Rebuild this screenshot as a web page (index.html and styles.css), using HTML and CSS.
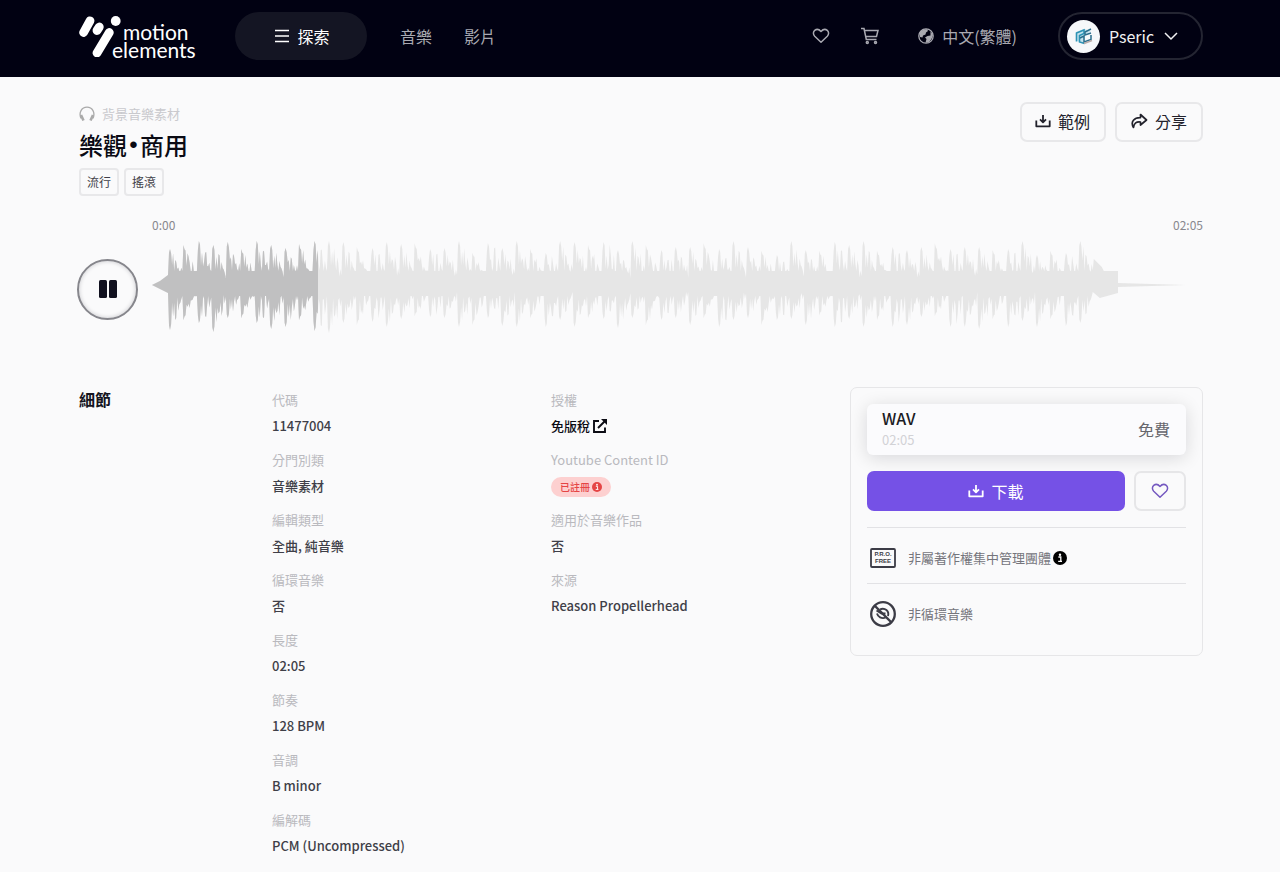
FILE: index.html
```html
<!DOCTYPE html>
<html lang="zh-Hant">
<head>
<meta charset="utf-8">
<meta name="viewport" content="width=device-width, initial-scale=1">
<title>樂觀・商用 - MotionElements</title>
<link rel="stylesheet" href="styles.css">
</head>
<body>
<svg class="sprite" aria-hidden="true">
  <symbol id="i-heart" viewBox="0 0 18 18"><path d="M9 15.3 2.700 9.200C.9 7.300 1.100 4.700 2.700 3.400c1.900-1.500 4.500-1 6.300 1.100 1.800-2.100 4.400-2.600 6.300-1.100 1.600 1.300 1.800 3.900 0 5.800z" fill="none" stroke="currentColor" stroke-width="1.500" stroke-linejoin="round"/></symbol>
  <symbol id="i-download" viewBox="0 0 16 16"><path d="M1.300 7.500v5.800h13.400V7.500M8 2v7M5 6.400l3 3 3-3" fill="none" stroke="currentColor" stroke-width="1.800" stroke-linejoin="round"/></symbol>
  <symbol id="i-info" viewBox="0 0 14 14"><circle cx="7" cy="7" r="7" fill="currentColor"/><circle cx="7" cy="3.700" r="1.200" fill="#fff"/><path d="M5.400 6h2.400v4M5.200 10.400h3.800" fill="none" stroke="#fff" stroke-width="1.300"/></symbol>
</svg>

<header class="topbar">
  <a class="logo" href="#" aria-label="motion elements">
    <svg class="logo-mark" viewBox="0 0 44 42" aria-hidden="true">
      <g stroke="#fff" stroke-linecap="round" fill="none" stroke-width="8.800">
        <path d="M4.600 17.500 11 5.800"/>
        <path d="M18 15.500 20.300 12"/>
        <path d="M18 38 30.300 17.500"/>
      </g>
      <circle cx="36.700" cy="6" r="4.900" fill="#fff"/>
    </svg>
    <span class="logo-text"><span class="logo-top">motion</span><span>elements</span></span>
  </a>
  <button class="explore" type="button">
    <svg width="16" height="16" viewBox="0 0 16 16" aria-hidden="true"><path d="M1 2.500h14M1 8h14M1 13.500h14" stroke="currentColor" stroke-width="1.500"/></svg>
    探索
  </button>
  <nav class="nav">
    <a href="#">音樂</a>
    <a href="#">影片</a>
  </nav>
  <div class="tools">
    <a href="#" aria-label="我的最愛"><svg width="18" height="18"><use href="#i-heart"/></svg></a>
    <a href="#" aria-label="購物車"><svg width="20" height="20" viewBox="0 0 20 20" fill="none" stroke="currentColor" stroke-width="1.500"><path d="M1 2.500h3L6.300 13.500h10.200M4.500 4.500H18L16.500 10.500H6"/><circle cx="7.300" cy="16.500" r="1"/><circle cx="15.500" cy="16.500" r="1"/></svg></a>
    <button class="lang" type="button">
      <svg width="16" height="16" viewBox="0 0 16 16" aria-hidden="true"><circle cx="8" cy="8" r="7.200" fill="none" stroke="currentColor" stroke-width="1.300"/><path d="M1.500 5C3 2 5.500 1 9 1.200L10 3 8 4.500 7.500 6.500 5 7.500 4.500 9.500 2 9zM12.500 3 15 7l-1.500 4-2.500 3.200-3.500.5L8.500 11 7 9.500 9.500 8l3-.5z" fill="currentColor"/></svg>
      中文(繁體)
    </button>
    <button class="user" type="button">
      <span class="avatar"><svg width="20" height="18" viewBox="0 0 20 18" fill="none" aria-hidden="true"><path d="m2 5 8-3 7 2-6 4-1 8-7-2z" fill="#c5e3ee"/><path d="M2.500 14.500V6L10 3v3.500L5.500 8.500V15l5 1.500" stroke="#2d93b5" stroke-width="1.600"/><path d="m17 2-6 3v3l6-2M6 11l4-2v6l7-2.500V8" stroke="#2b6e8c" stroke-width="1.500"/><path d="m10 16.500 8-3" stroke="#b9aaa8" stroke-width="1.500"/></svg></span>
      Pseric
      <svg class="chevron" width="14" height="14" viewBox="0 0 14 14" fill="none" aria-hidden="true"><path d="m1 4 6 6 6-6" stroke="currentColor" stroke-width="1.500"/></svg>
    </button>
  </div>
</header>

<main class="page">
  <section class="head">
    <div>
      <p class="kind">
        <svg width="16" height="16" viewBox="0 0 16 16" fill="none" aria-hidden="true"><path d="M2.200 12.500C-.8 6.500 2.800 1.200 8 1.200s8.800 5.300 5.800 11.300" stroke="#aaa" stroke-width="1.300"/><path d="m2 9 2.500 5.500M14 9l-2.500 5.500" stroke="#aaa" stroke-width="2.600"/></svg>
        背景音樂素材
      </p>
      <h1>樂觀<span class="dot">•</span>商用</h1>
      <div class="tags"><a href="#">流行</a><a href="#">搖滾</a></div>
    </div>
    <div class="actions">
      <button class="btn" type="button"><svg width="16" height="16"><use href="#i-download"/></svg>範例</button>
      <button class="btn" type="button"><svg width="18" height="18" viewBox="0 0 18 18" fill="none" aria-hidden="true"><path d="M10.500 2.500 16.500 8l-6 5v-3C6.500 9.500 4 11 3.500 15.500 0 9.500 4.500 5.500 10.500 5.700z" stroke="currentColor" stroke-width="1.700" stroke-linejoin="round"/></svg>分享</button>
    </div>
  </section>

  <section class="player">
    <div class="times"><span>0:00</span><span>02:05</span></div>
    <button class="pause" type="button" aria-label="暫停"><svg width="20" height="20" viewBox="0 0 20 20"><rect x="1" y="1" width="8" height="18" rx="1.500" fill="currentColor"/><rect x="11" y="1" width="8" height="18" rx="1.500" fill="currentColor"/></svg></button>
    <svg class="wave" viewBox="0 0 1051 100" preserveAspectRatio="none" aria-hidden="true">
      <defs><clipPath id="played"><rect width="166" height="100"/></clipPath></defs>
      <path class="wave-rest" d=""/>
      <path class="wave-played" d="" clip-path="url(#played)"/>
    </svg>
  </section>

  <section class="details">
    <h2>細節</h2>
    <dl>
      <div><dt>代碼</dt><dd>11477004</dd></div>
      <div><dt>分門別類</dt><dd>音樂素材</dd></div>
      <div><dt>編輯類型</dt><dd>全曲, 純音樂</dd></div>
      <div><dt>循環音樂</dt><dd>否</dd></div>
      <div><dt>長度</dt><dd>02:05</dd></div>
      <div><dt>節奏</dt><dd>128 BPM</dd></div>
      <div><dt>音調</dt><dd>B minor</dd></div>
      <div><dt>編解碼</dt><dd>PCM (Uncompressed)</dd></div>
    </dl>
    <dl>
      <div><dt>授權</dt><dd><a class="license" href="#">免版稅<svg width="14" height="14" viewBox="0 0 14 14" fill="none" aria-hidden="true"><path d="M6 2H1v11h11V8.500M5 9l7-7" stroke="currentColor" stroke-width="1.900"/><path d="M8 0h6v6z" fill="currentColor"/></svg></a></dd></div>
      <div><dt>Youtube Content ID</dt><dd><span class="badge">已註冊<svg width="10" height="10"><use href="#i-info"/></svg></span></dd></div>
      <div><dt>適用於音樂作品</dt><dd>否</dd></div>
      <div><dt>來源</dt><dd>Reason Propellerhead</dd></div>
    </dl>
    <aside class="card">
      <div class="format">
        <div><strong>WAV</strong><small>02:05</small></div>
        <span>免費</span>
      </div>
      <div class="buy">
        <button class="download" type="button"><svg width="16" height="16"><use href="#i-download"/></svg>下載</button>
        <button class="fav" type="button" aria-label="加入最愛"><svg width="18" height="18"><use href="#i-heart"/></svg></button>
      </div>
      <div class="note">
        <svg width="26" height="26" viewBox="0 0 26 26" aria-hidden="true"><rect x="1" y="4" width="24" height="18" rx="1" fill="none" stroke="#3c3c46" stroke-width="1.800"/><text x="13" y="11" class="pro">P.R.O.</text><text x="13" y="18" class="pro">FREE</text></svg>
        <span>非屬著作權集中管理團體</span><svg class="info" width="14" height="14"><use href="#i-info"/></svg>
      </div>
      <div class="note">
        <svg width="26" height="26" viewBox="0 0 26 26" fill="none" stroke="#3c3c46" aria-hidden="true"><circle cx="13" cy="13" r="11.800" stroke-width="2.300"/><path d="m4.500 4.500 17 17" stroke-width="2.400"/><path d="M10 8.300c5-2 9.500 1.700 8 6.700M7 12.500c1 3.500 4.500 5.500 8.500 4.200M6.500 9.500l5 3h4" stroke-width="1.900"/></svg>
        <span>非循環音樂</span>
      </div>
    </aside>
  </section>
</main>
<script src="wave.js"></script>
</body>
</html>
```

FILE: styles.css
```css
* { box-sizing: border-box; }
body {
  margin: 0;
  background: #fafafb;
  color: #3f3f48;
  font-family: "Noto Sans CJK TC", sans-serif;
  font-size: 13px;
  line-height: 26px;
}
h1, h2, p, dl, dd { margin: 0; }
a { color: inherit; text-decoration: none; }
button { font: inherit; color: inherit; background: none; border: 0; padding: 0; cursor: pointer; }
svg { display: block; flex: none; }
.sprite { position: absolute; width: 0; height: 0; }

.topbar {
  display: flex;
  align-items: center;
  padding: 12px 77px 17px 79px;
  background: #010112;
  color: #a9a9b1;
  font-size: 16px;
}
.logo { display: flex; width: 117px; padding-top: 2px; color: #fff; }
.logo-mark { width: 44px; height: 42px; }
.logo-text {
  display: flex;
  flex-direction: column;
  margin: 8px 0 0 -11px;
  font: 21px/18px Lato, sans-serif;
}
.logo-top { padding-left: 11px; }
.explore {
  display: flex;
  align-items: center;
  justify-content: center;
  gap: 7px;
  width: 132px;
  height: 48px;
  margin-left: 39px;
  padding-left: 2px;
  border-radius: 24px;
  background: #141523;
  color: #fff;
}
.nav { display: flex; gap: 32px; margin-left: 33px; }
.tools { display: flex; align-items: center; margin-left: auto; }
.tools > a + a { margin-left: 30px; }
.lang { display: flex; align-items: center; gap: 8px; margin-left: 38px; }
.user {
  display: flex;
  align-items: center;
  width: 145px;
  height: 48px;
  margin-left: 41px;
  padding-left: 7px;
  border: 2px solid #242532;
  border-radius: 24px;
  color: #f1f1f3;
}
.avatar {
  display: grid;
  place-items: center;
  width: 33px;
  height: 33px;
  margin-right: 9px;
  border-radius: 50%;
  background: #f6f8fa;
}
.chevron { margin-left: 10px; }

.page { padding: 24px 77px 12px 79px; }
.head { display: flex; justify-content: space-between; align-items: flex-start; }
.kind { display: flex; align-items: center; gap: 7px; color: #c9c9cd; }
h1 { display: flex; font-size: 24px; line-height: 36px; font-weight: 500; color: #0a0a14; }
.dot { width: 13px; font-family: "Liberation Sans", sans-serif; font-size: 24px; text-align: center; }
.tags { display: flex; gap: 5px; margin-top: 5px; }
.tags a {
  padding: 0 6px;
  border: 2px solid #e8e8ea;
  border-radius: 4px;
  font-size: 12px;
  line-height: 24px;
}
.actions { display: flex; gap: 9px; padding-top: 1px; }
.btn {
  display: flex;
  align-items: center;
  gap: 7px;
  height: 40px;
  padding: 0 14px 2px 13px;
  border: 2px solid #e8e8ea;
  border-radius: 7px;
  color: #22222c;
  font-size: 16px;
}

.player {
  display: grid;
  grid-template-columns: 73px 1fr;
  align-items: center;
  margin-top: 20px;
}
.times {
  grid-column: 2;
  display: flex;
  justify-content: space-between;
  color: #88888e;
  font-size: 12px;
  line-height: 18px;
}
.pause {
  display: grid;
  place-items: center;
  width: 61px;
  height: 61px;
  margin: 10px 0 0 -2px;
  border: 2px solid #86868c;
  border-radius: 50%;
  box-shadow: inset 0 0 4px #c8c8cc;
  color: #11111f;
}
.wave { width: 100%; height: 100px; }
.wave-rest { fill: #e6e6e6; }
.wave-played { fill: #c0c0c1; }

.details {
  display: grid;
  grid-template-columns: 193px 279fr 299fr 353px;
  align-items: start;
  margin-top: 53px;
}
h2 { font-size: 16px; line-height: 24px; font-weight: 700; color: #14141e; }
dl { display: grid; gap: 8px; }
dt { color: #b9b9be; }
dd { font-weight: 500; }
.license { display: flex; align-items: center; gap: 3px; color: #0c0c14; }
.badge {
  display: inline-flex;
  align-items: center;
  gap: 2px;
  height: 20px;
  padding: 0 9px;
  border-radius: 10px;
  background: #fdd0d0;
  color: #e54545;
  font-size: 10px;
  vertical-align: middle;
}

.card { padding: 16px; border: 1px solid #e6e6e8; border-radius: 7px; }
.format {
  display: flex;
  align-items: center;
  justify-content: space-between;
  height: 51px;
  padding: 0 16px 2px 15px;
  border-radius: 6px;
  background: #fbfbfd;
  box-shadow: 0 3px 18px #00001424;
  color: #66666c;
  font-size: 16px;
}
.format strong, .format small { display: block; }
.format strong { color: #1c1c24; font-weight: 500; line-height: 22px; }
.format small { color: #d2d2d6; font-size: 13px; line-height: 21px; }
.buy { display: flex; gap: 9px; margin: 16px 0; }
.download {
  display: flex;
  flex: 1;
  align-items: center;
  justify-content: center;
  gap: 7px;
  height: 40px;
  border-radius: 7px;
  background: #7551e6;
  color: #fff;
  font-size: 16px;
}
.fav {
  display: grid;
  place-items: center;
  width: 52px;
  border: 2px solid #e6e6e8;
  border-radius: 7px;
  color: #7559c0;
}
.note {
  display: flex;
  align-items: center;
  height: 56px;
  padding: 4px 3px 0;
  border-top: 1px solid #e2e2e5;
  color: #75757c;
}
.note span { margin-left: 12px; }
.info { margin-left: 2px; color: #000; }
.pro { font: 700 6px "Liberation Sans", sans-serif; text-anchor: middle; fill: #3c3c46; }
```

FILE: wave.js
```js
// Peak heights of each beat, above and below the centre line.
const above = [36,42,44,40,43,38,44,40,37,43,44,44,43,40,37,43,41,44,36,37,44,34,42,37,44,38,32,44,43,42,43,35,44,42,35,38,38,44,36,44,38,36,30,44,35,36,43,40,44,36,38,35,38,44,36,38,38,37,36,44,30,36,32,44];
const below = [45,37,38,47,33,35,38,44,42,37,46,48,38,42,37,42,34,33,32,33,42,42,33,41,42,35,42,35,42,35,34,43,33,42,35,33,40,35,42,35,33,42,35,34,40,32,42,34,42,37,42,40,32,33,42,42,44,36,42,36,42,36,41,38];
// One level per pixel column of a beat; the three shapes alternate.
const shapes = [
  [.9, 1, .88, .5, .76, .4, .72, .62, .36, .6, .4, .3, .42, .22],
  [.8, 1, .92, .5, .74, .36, .42, .82, .78, .4, .34, .62, .4, .24],
  [.95, .85, .82, .45, .7, .56, .62, .36, .3, .48, .34, .26, .22, .2]
];
const centre = 51;
const start = 17;
const step = 14.45;

function edge(peaks, sign, floor) {
  const points = [];
  peaks.forEach((peak, beat) => {
    const shape = shapes[(beat * 5 + (beat >> 2)) % 3];
    shape.forEach((part, i) => {
      const wobble = ((beat * 7 + i * 11 + (sign > 0 ? 3 : 0)) % 9 - 4) / 35;
      const level = i < 3 ? part : part + wobble;
      const size = Math.max(peak * level, beat % 4 === 3 && i > 10 ? 7 : floor);
      points.push([start + beat * step + i * step / 14, centre + sign * size]);
    });
  });
  return points;
}

const last = start + above.length * step;
const outline = [
  [0, centre], [8, centre - 4], [16, centre - 10],
  ...edge(above, -1, 14),
  [last, centre - 26], [last + 8, centre - 18], [last + 10, centre - 14], [966, centre - 14], [966, centre - 2], [1034, centre],
  [966, centre + 2], [966, centre + 8], [last + 6, centre + 13],
  ...edge(below, 1, 11).reverse(),
  [16, centre + 8], [8, centre + 4]
];
const d = "M" + outline.map(p => p.map(n => n.toFixed(1)).join(" ")).join("L") + "Z";
document.querySelectorAll(".wave path").forEach(path => path.setAttribute("d", d));
```
